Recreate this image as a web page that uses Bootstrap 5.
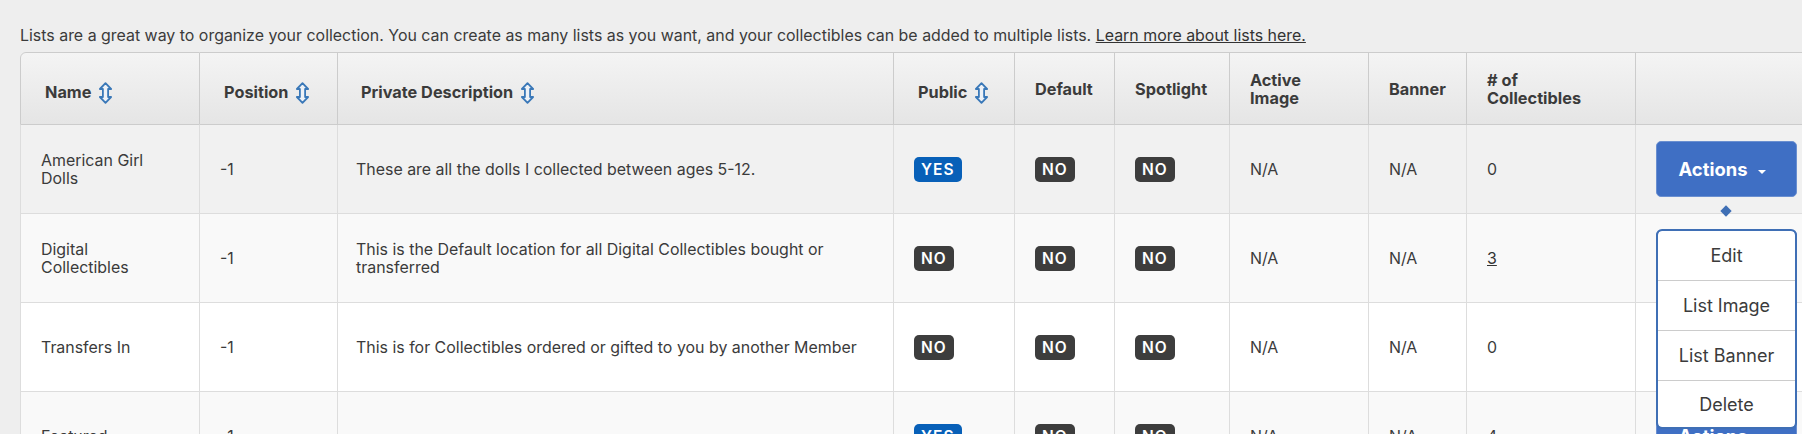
<!DOCTYPE html>
<html lang="en">
<head>
<meta charset="utf-8">
<title>Lists</title>
<link rel="stylesheet" href="https://cdn.jsdelivr.net/npm/bootstrap@5.3.0/dist/css/bootstrap.min.css">
<style>
html,body{height:434px;overflow:hidden}
body{background:#eee;color:#3b3b3b;font-family:Inter,"Liberation Sans",sans-serif;font-size:15.93px;line-height:18px}
.pg-wrap{padding:25px 0 0 20px}
.intro{height:27px;margin:0;line-height:22px}
.intro a,.lst a{color:#333}
.tbl-clip{overflow:hidden}
.lst{table-layout:fixed;width:1801px;border-collapse:separate;border-spacing:0;margin:0;color:#3b3b3b}
.c1{width:180px}.c2{width:138px}.c3{width:556px}.c4{width:121px}.c5{width:100px}.c6{width:115px}.c7{width:139px}.c8{width:98px}.c9{width:169px}.c10{width:185px}
.lst th{height:73px;padding:0 50px 0 20px;vertical-align:middle;font-weight:700;font-size:16.3px;color:#3b3b3b;background:linear-gradient(#f4f4f4,#e5e5e5);border:0;border-right:1px solid #ccc;border-top:1px solid #ccc;border-bottom:1px solid #ccc;line-height:18px;box-shadow:none}
.lst th:first-child{border-left:1px solid #ccc;border-top-left-radius:6px}
.lst th.srt{padding:8px 0 0 24px;white-space:nowrap}
.lst th.srt.dsc-h{padding-left:23px}
.lst th.srt svg{margin-left:3px;vertical-align:-6px}
.lst td{height:89px;padding:2px 30px 0 20px;vertical-align:middle;border:0;border-right:1px solid #ddd;border-bottom:1px solid #ddd;line-height:18.5px;box-shadow:none}
.lst td:first-child{border-left:1px solid #ddd}
.lst td.dsc{padding:2px 30px 0 18px}
.lst tr.r1 td{background:#f1f1f1}.lst tr.r2 td{background:#f9f9f9}.lst tr.r3 td{background:#fff}
.flag{display:inline-block;height:25px;line-height:25px;padding:0 7px;margin-top:-2px;border-radius:5px;background:#3d3d3d;color:#fff;font-weight:600;font-size:15.5px;letter-spacing:1px}
.flag.on{background:#0860b8}
.act-wrap{position:relative;width:141px;margin-top:-2px}
.act-btn{width:141px;height:56px;background:#3f6fc4;border:1px solid #6a8fd0;border-radius:5px;color:#fff;font-weight:700;font-size:18.4px;padding:2px 8px 0 0}
.act-btn.dropdown-toggle::after{margin-left:11px;border-top-width:4px;border-left-width:4px;border-right-width:4px;vertical-align:2px}
.act-btn:hover,.act-btn:active{background:#3f6fc4;color:#fff}
.dmd{position:absolute;left:66px;top:66px;width:8px;height:8px;background:#3f6fb5;transform:rotate(45deg)}
.act-menu{top:88px;left:0;width:141px;min-width:0;padding:0;margin:0;border:2px solid #3f6fb5;border-radius:6px;overflow:hidden}
.act-menu .dropdown-item{height:50px;line-height:50px;padding:0;text-align:center;font-size:18px;color:#3b3b3b;border-bottom:1px solid #ccc}
.act-menu li:last-child .dropdown-item{height:46px;line-height:48px;border-bottom:0}
</style>
</head>
<body>
<svg width="0" height="0" class="position-absolute"><defs><symbol id="ud" viewBox="0 0 14 22"><path d="M7 1.2 12.6 7H9.6V15H12.6L7 20.8 1.4 15H4.4V7H1.4Z" fill="#eef2f7" stroke="#3a78b8" stroke-width="1.8" stroke-linejoin="round"/></symbol></defs></svg>
<div class="pg-wrap">
<p class="intro">Lists are a great way to organize your collection. You can create as many lists as you want, and your collectibles can be added to multiple lists. <a href="#">Learn more about lists here.</a></p>
<div class="tbl-clip">
<table class="table lst">
<colgroup><col class="c1"><col class="c2"><col class="c3"><col class="c4"><col class="c5"><col class="c6"><col class="c7"><col class="c8"><col class="c9"><col class="c10"></colgroup>
<thead><tr>
<th class="srt">Name <svg width="15" height="22"><use href="#ud"/></svg></th>
<th class="srt">Position <svg width="15" height="22"><use href="#ud"/></svg></th>
<th class="srt dsc-h">Private Description <svg width="15" height="22"><use href="#ud"/></svg></th>
<th class="srt">Public <svg width="15" height="22"><use href="#ud"/></svg></th>
<th>Default</th><th>Spotlight</th><th>Active Image</th><th>Banner</th><th># of Collectibles</th><th></th>
</tr></thead>
<tbody>
<tr class="r1"><td>American Girl Dolls</td><td>-1</td><td class="dsc">These are all the dolls I collected between ages 5-12.</td><td><span class="flag on">YES</span></td><td><span class="flag">NO</span></td><td><span class="flag">NO</span></td><td>N/A</td><td>N/A</td><td>0</td>
<td><div class="dropdown act-wrap"><button class="btn act-btn dropdown-toggle" type="button">Actions</button><span class="dmd"></span>
<ul class="dropdown-menu show act-menu"><li><a class="dropdown-item" href="#">Edit</a></li><li><a class="dropdown-item" href="#">List Image</a></li><li><a class="dropdown-item" href="#">List Banner</a></li><li><a class="dropdown-item" href="#">Delete</a></li></ul></div></td></tr>
<tr class="r2"><td>Digital Collectibles</td><td>-1</td><td class="dsc">This is the Default location for all Digital Collectibles bought or transferred</td><td><span class="flag">NO</span></td><td><span class="flag">NO</span></td><td><span class="flag">NO</span></td><td>N/A</td><td>N/A</td><td><a href="#">3</a></td><td><div class="act-wrap"><button class="btn act-btn dropdown-toggle" type="button">Actions</button></div></td></tr>
<tr class="r3"><td>Transfers In</td><td>-1</td><td class="dsc">This is for Collectibles ordered or gifted to you by another Member</td><td><span class="flag">NO</span></td><td><span class="flag">NO</span></td><td><span class="flag">NO</span></td><td>N/A</td><td>N/A</td><td>0</td><td><div class="act-wrap"><button class="btn act-btn dropdown-toggle" type="button">Actions</button></div></td></tr>
<tr class="r2"><td>Featured</td><td>-1</td><td class="dsc"></td><td><span class="flag on">YES</span></td><td><span class="flag">NO</span></td><td><span class="flag">NO</span></td><td>N/A</td><td>N/A</td><td>4</td><td><div class="act-wrap"><button class="btn act-btn dropdown-toggle" type="button">Actions</button></div></td></tr>
</tbody>
</table>
</div>
</div>
<script src="https://cdn.jsdelivr.net/npm/bootstrap@5.3.0/dist/js/bootstrap.bundle.min.js"></script>
</body>
</html>
